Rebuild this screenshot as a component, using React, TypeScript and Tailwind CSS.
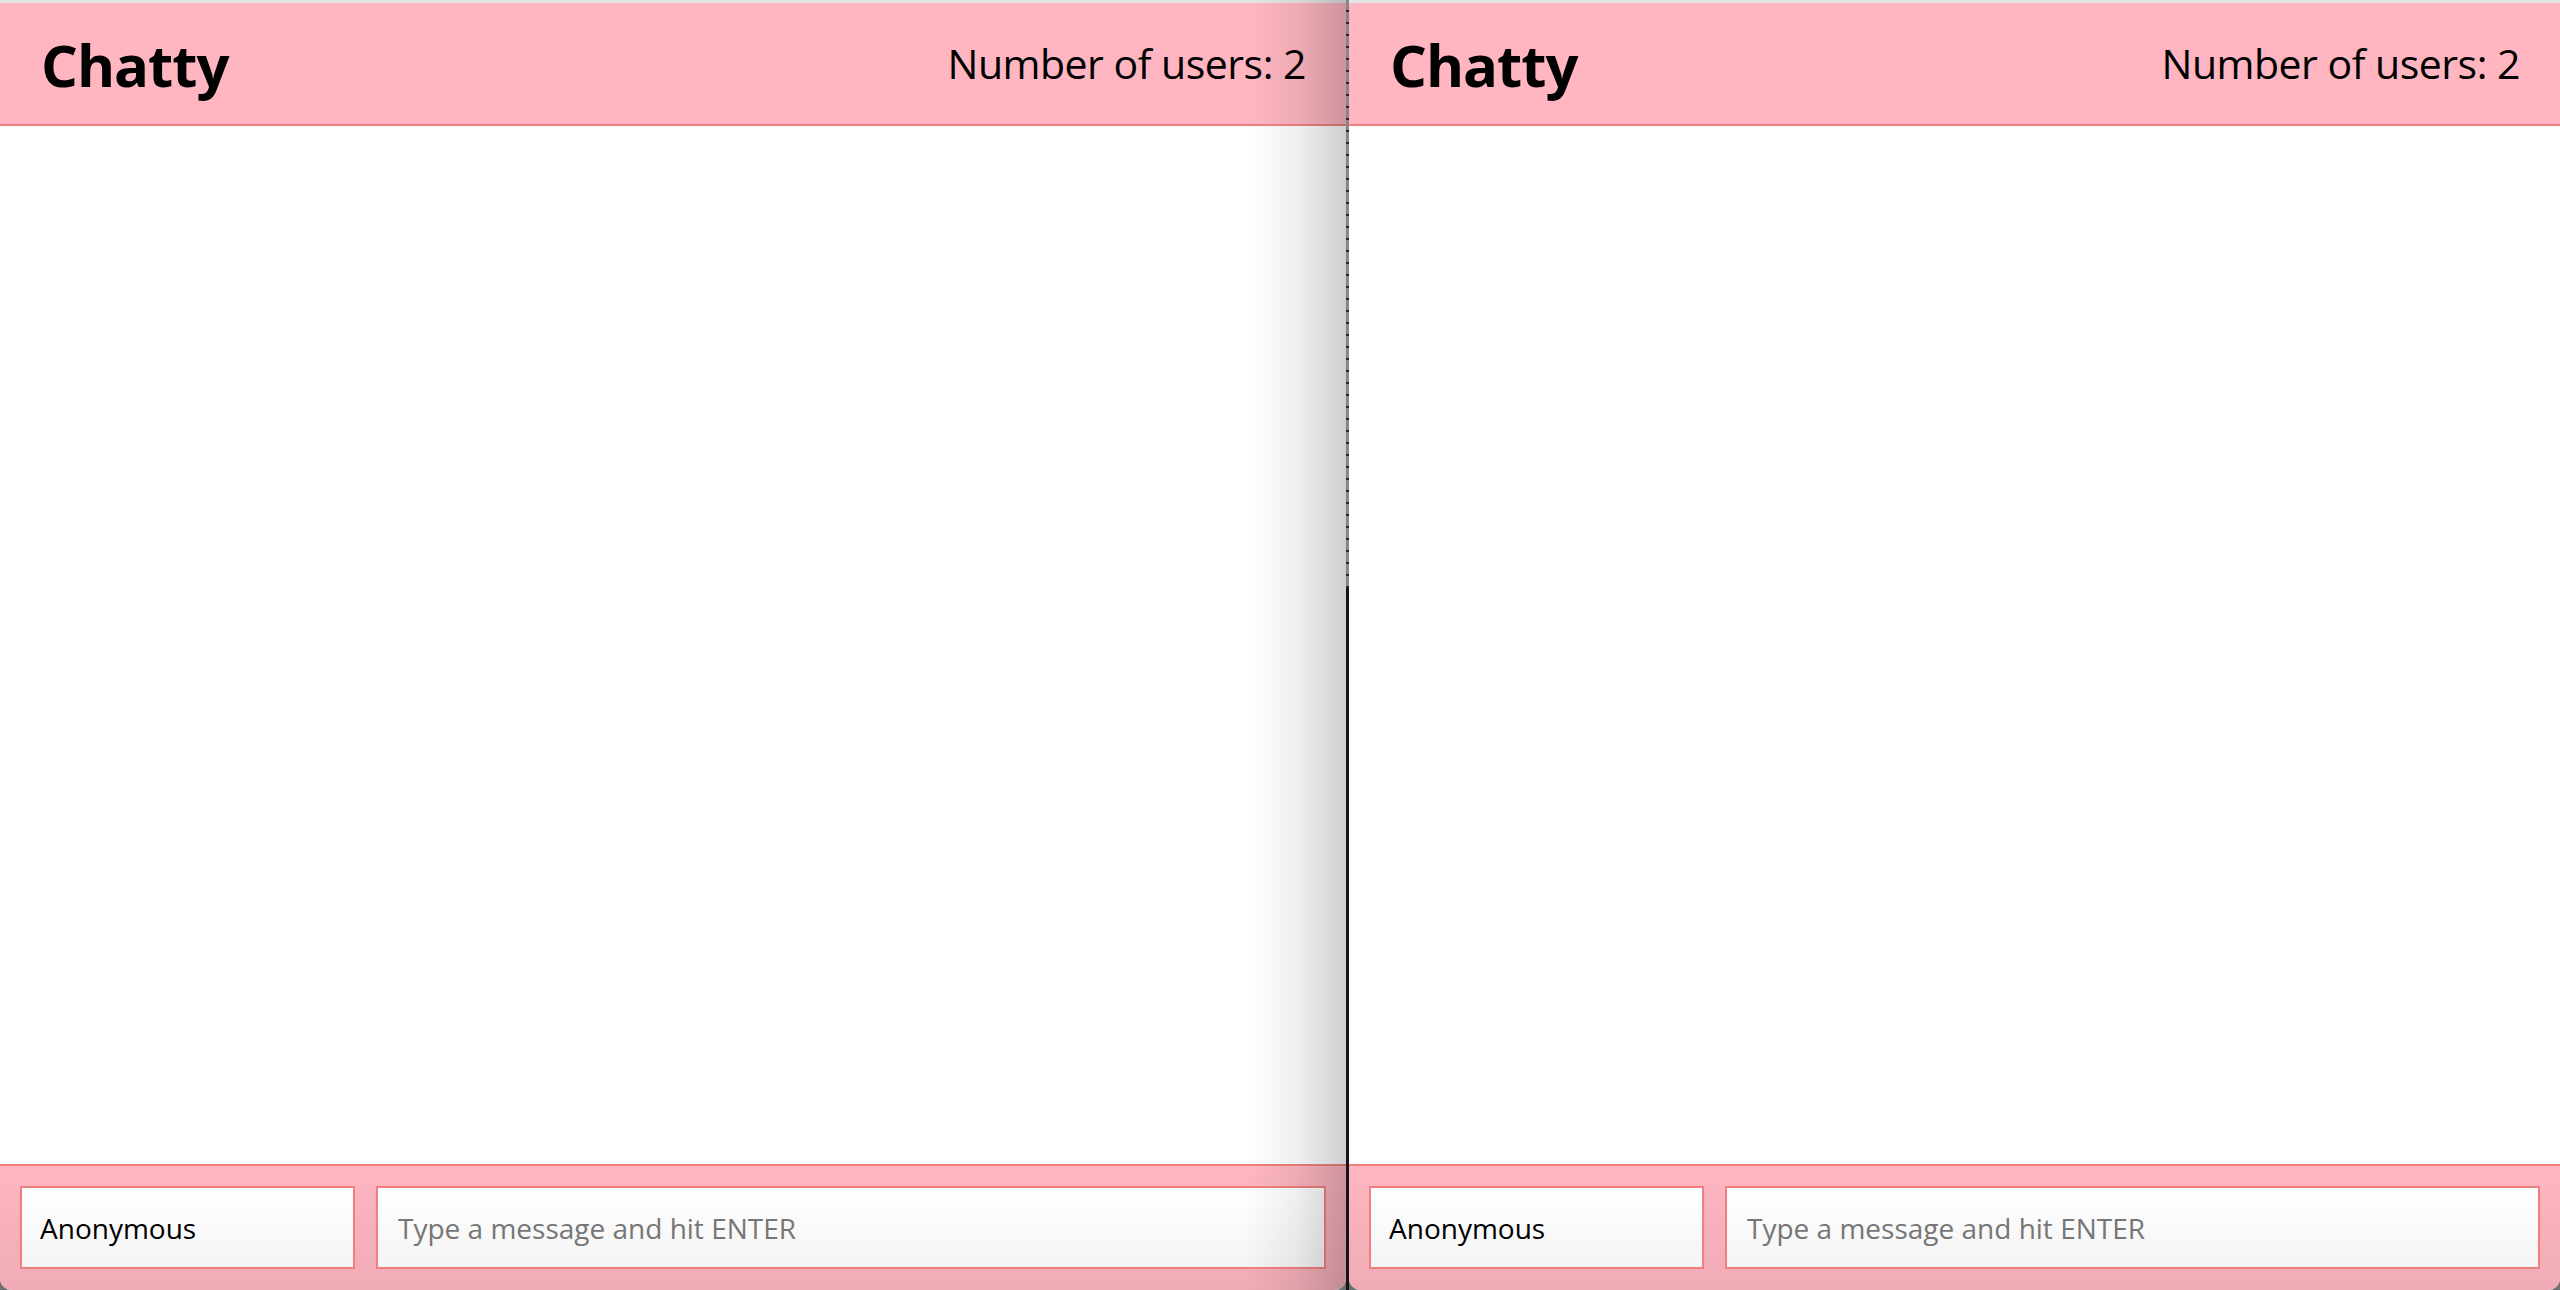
import React from "react";

interface ChatWindowProps {
  users: number;
  shaded?: boolean;
  className?: string;
}

function ChatWindow({ users, shaded, className }: ChatWindowProps) {
  return (
    <div className={`relative flex flex-col h-full bg-white rounded-b-[12px] overflow-hidden ${className ?? ""}`}>
      <div className="h-[3px] bg-[#e6e6e6] shrink-0" />
      <nav className="h-[123px] shrink-0 bg-[#ffb6c1] border-b-2 border-[#f08080] flex items-center justify-between pl-[41px] pr-[40px]">
        <span className="text-[58px] font-bold leading-none tracking-[-1px] text-black mt-[2px]">Chatty</span>
        <span className="text-[41px] leading-none tracking-[-0.5px] text-black">Number of users: {users}</span>
      </nav>

      <main className="flex-1" />

      <footer className="relative h-[126px] shrink-0 bg-[#ffb6c1] border-t-2 border-[#f08080] flex items-start gap-[21px] pt-[20px] px-[20px]">
        <div className="absolute inset-0 bg-gradient-to-b from-transparent to-black/[0.06] pointer-events-none" />
        <input
          defaultValue="Anonymous"
          className="relative w-[335px] h-[83px] shrink-0 border-2 border-[#f08080] bg-gradient-to-b from-white to-[#f4f4f4] px-[18px] text-[28px] text-black outline-none"
        />
        <input
          placeholder="Type a message and hit ENTER"
          className="relative flex-1 min-w-0 h-[83px] border-2 border-[#f08080] bg-gradient-to-b from-white to-[#f4f4f4] px-[20px] text-[28px] text-black placeholder:text-[#767676] outline-none"
        />
      </footer>

      {shaded && (
        <div className="absolute top-0 right-0 bottom-0 w-[100px] bg-gradient-to-r from-transparent via-black/[0.06] to-black/[0.19] pointer-events-none" />
      )}
    </div>
  );
}

export default function App() {
  return (
    <div
      className="w-[2560px] h-[1290px] flex bg-[#6e6e6e] overflow-hidden"
      style={{ fontFamily: '"Open Sans", "Noto Sans", sans-serif' }}
    >
      <ChatWindow users={2} shaded className="w-[1346px] shrink-0" />
      <div className="w-[3px] shrink-0 flex flex-col">
        <div className="h-[588px] bg-[repeating-linear-gradient(to_bottom,#888_0px,#888_10px,#3a1a1a_10px,#3a1a1a_12px)]" />
        <div className="flex-1 bg-[#151515]" />
      </div>
      <ChatWindow users={2} className="flex-1 min-w-0" />
    </div>
  );
}
